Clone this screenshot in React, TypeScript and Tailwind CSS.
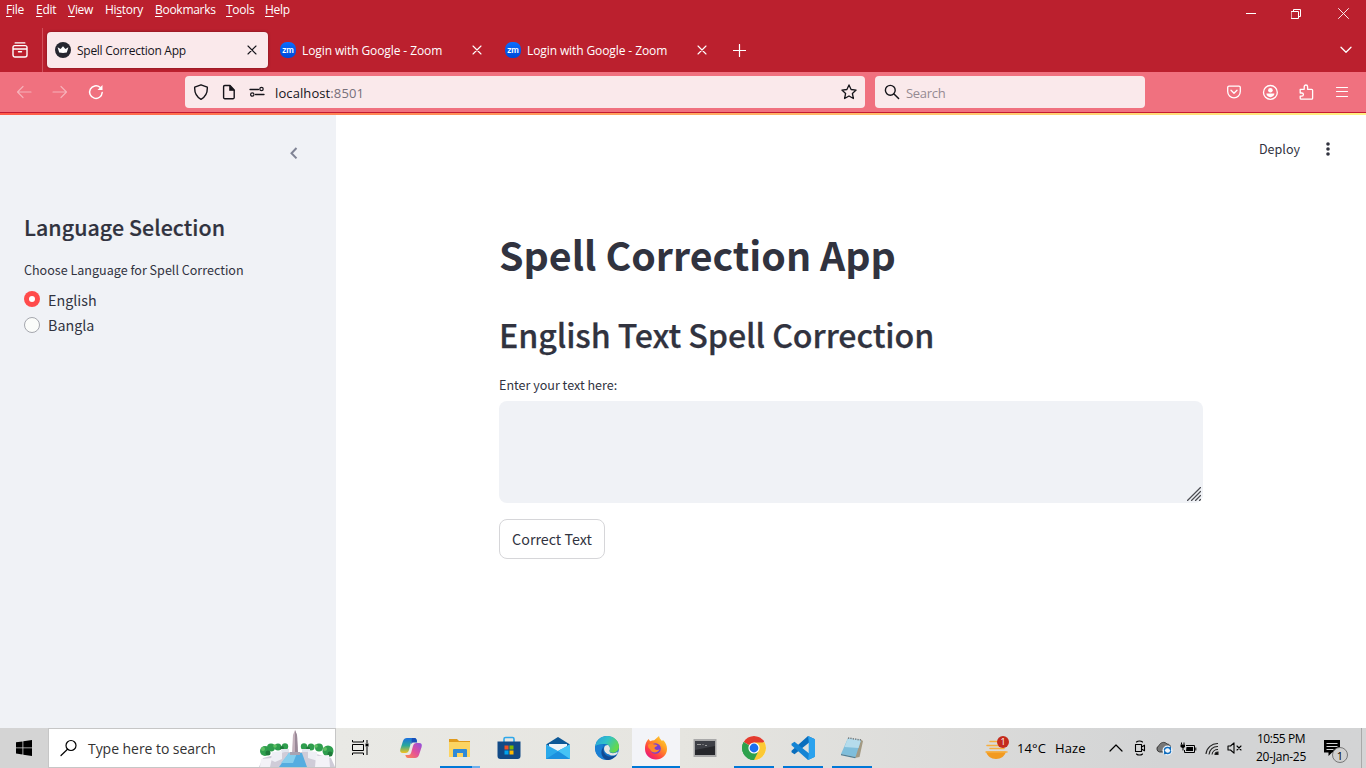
import React from 'react';

type Kids = { children?: React.ReactNode; className?: string };

const UI = "font-['Open_Sans','Noto_Sans',sans-serif]";
const PAGE = "font-['Noto_Sans_CJK_SC','Noto_Sans',sans-serif]";

function Ico({ s = 16, w, h, children, className = '' }: Kids & { s?: number; w?: number; h?: number }) {
  const W = w ?? s;
  const H = h ?? s;
  return (
    <svg
      width={W}
      height={H}
      viewBox={`0 0 ${W} ${H}`}
      fill="none"
      stroke="currentColor"
      strokeLinecap="round"
      strokeLinejoin="round"
      className={`shrink-0 ${className}`}
    >
      {children}
    </svg>
  );
}

function MenuBar() {
  const items: [string, string, string, string][] = [
    ['', 'F', 'ile', 'w-[30px]'],
    ['', 'E', 'dit', 'w-[32px]'],
    ['', 'V', 'iew', 'w-[37px]'],
    ['Hi', 's', 'tory', 'w-[50px]'],
    ['', 'B', 'ookmarks', 'w-[71px]'],
    ['', 'T', 'ools', 'w-[39px]'],
    ['', 'H', 'elp', 'w-[40px]'],
  ];
  return (
    <div className="flex h-7 justify-between text-white">
      <div className="flex pl-[6px] text-[12px] leading-[20px] tracking-[-0.28px]">
        {items.map(([a, u, b, w]) => (
          <span key={u + b} className={`${w} whitespace-nowrap`}>
            {a}
            <span className="underline underline-offset-2">{u}</span>
            {b}
          </span>
        ))}
      </div>
      <div className="flex h-[27px] items-center">
        <div className="flex w-[46px] justify-center">
          <Ico w={10} h={11}><path d="M0 5.5h10" strokeLinecap="butt" /></Ico>
        </div>
        <div className="flex w-[46px] justify-center">
          <Ico s={11} className="mt-px -ml-px"><path d="M.5 2.500h7v7h-7zM2.500 2V.500h7v7H8" strokeLinejoin="miter" /></Ico>
        </div>
        <div className="flex w-[46px] justify-center">
          <Ico s={11}><path d="M.5.5l10 10M10.5.5l-10 10" strokeWidth=".9" /></Ico>
        </div>
      </div>
    </div>
  );
}

function ZoomLogo() {
  return (
    <div className="flex size-4 shrink-0 items-center justify-center rounded-[7px] bg-linear-to-b from-[#0a6cff] to-[#0048d8] font-['Lato',sans-serif] text-[9px] leading-none font-bold text-white">
      <span className="mt-[-2px]">zm</span>
    </div>
  );
}

function CloseX({ className = '' }: Kids) {
  return (
    <Ico s={10} className={className}>
      <path d="M1 1l8 8M9 1L1 9" strokeWidth="1.1" />
    </Ico>
  );
}

function TabStrip() {
  return (
    <div className="flex h-11 items-center text-[12px] text-white">
      <div className="flex h-11 w-[43px] items-center border-r border-[#d0505c] pl-3">
        <Ico s={16}>
          <path d="M3.200 .9h9.600M1 7V5.400a1.800 1.800 0 0 1 1.800-1.800h10.400A1.800 1.800 0 0 1 15 5.400V13a2 2 0 0 1-2 2H3a2 2 0 0 1-2-2V7h14M6.500 9.700h3" strokeWidth="1.4" />
        </Ico>
      </div>
      <div className="ml-1 flex h-9 w-[221px] items-center rounded-[4px] bg-[#fae9eb] pr-[11px] pl-2 text-[#15141a] shadow-[0_0_3px_rgba(0,0,0,0.4)]">
        <svg width="16" height="16" viewBox="0 0 16 16" className="shrink-0">
          <circle cx="8" cy="8" r="8" fill="#262730" />
          <path d="M2.600 5.200l3 1.700L8 4.200l2.400 2.700 3-1.700-1.600 5.400c-2.500.5-5 .5-7.600 0z" fill="#fff" />
        </svg>
        <span className="ml-[6px] flex-1 pt-[2px] tracking-[-0.27px] whitespace-nowrap">Spell Correction App</span>
        <CloseX />
      </div>
      <div className="flex w-[225px] items-center pl-3">
        <ZoomLogo />
        <span className="ml-[6px] w-[170px] pt-[2px] tracking-[-0.1px] whitespace-nowrap">Login with Google - Zoom</span>
        <CloseX />
      </div>
      <div className="flex w-[225px] items-center pl-3">
        <ZoomLogo />
        <span className="ml-[6px] w-[170px] pt-[2px] tracking-[-0.1px] whitespace-nowrap">Login with Google - Zoom</span>
        <CloseX />
      </div>
      <Ico s={13} className="mt-px ml-[15px]"><path d="M6.500 .5v12M.5 6.500h12" strokeWidth="1.2" /></Ico>
      <Ico w={12} h={8} className="mr-[14px] ml-auto"><path d="M1 1.200l5 5 5-5" strokeWidth="1.3" /></Ico>
    </div>
  );
}

function Toolbar() {
  return (
    <div className="flex h-10 items-center bg-[#f0717f] text-white">
      <Ico s={16} className="ml-4 opacity-45"><path d="M15 8H1.500M7 2.500L1.500 8 7 13.500" strokeWidth="1.2" /></Ico>
      <Ico s={16} className="ml-5 opacity-45"><path d="M1 8h13.500M9 2.500l5.500 5.500L9 13.500" strokeWidth="1.2" /></Ico>
      <Ico s={16} className="ml-5">
        <path d="M14.200 8.500a6.300 6.300 0 1 1-2.200-5.200" strokeWidth="1.500" />
        <path d="M14.500 1v5H9.500z" fill="currentColor" stroke="none" />
      </Ico>
      <div className="ml-[81px] flex h-8 w-[680px] items-center rounded-[4px] bg-[#fae9eb] px-2 text-[#15141a]">
        <Ico s={16}><path d="M8 .800l6.300 2.400c.3 5.500-1.800 9.700-6.300 12.100C3.500 12.900 1.400 8.700 1.700 3.200z" strokeWidth="1.400" /></Ico>
        <Ico s={16} className="ml-3">
          <path d="M3.800 1.500H9L13.200 6v7.500a1.200 1.200 0 0 1-1.200 1.200H3.800a1.200 1.200 0 0 1-1.200-1.200V2.700a1.200 1.200 0 0 1 1.200-1.200z" strokeWidth="1.400" />
          <path d="M8.500 1.500V6.500h4.700z" fill="currentColor" strokeWidth=".6" />
        </Ico>
        <Ico s={16} className="ml-3">
          <path d="M1 5.500h8.500M6.500 10.500H15" strokeWidth="1.300" />
          <circle cx="12.500" cy="5" r="1.700" strokeWidth="1.200" />
          <circle cx="3.300" cy="10.500" r="1.700" strokeWidth="1.200" />
        </Ico>
        <span className="ml-[10px] flex-1 pt-[3px] text-[13px] tracking-[0.1px]">
          localhost<span className="text-[#77707a]">:8501</span>
        </span>
        <Ico s={16}><path d="M8 .9l2.100 4.600 5 .600-3.700 3.400 1 5L8 12l-4.400 2.500 1-5L.9 6.100l5-.600z" strokeWidth="1.300" /></Ico>
      </div>
      <div className="ml-[10px] flex h-8 w-[270px] items-center rounded-[4px] bg-[#fae9eb] pl-[9px] text-[#15141a]">
        <Ico s={16}><circle cx="6.300" cy="6.300" r="4.900" strokeWidth="1.400" /><path d="M10 10l4.600 4.500" strokeWidth="1.500" /></Ico>
        <span className="ml-[6px] pt-[3px] text-[13px] tracking-[-0.3px] text-[#958a92]">Search</span>
      </div>
      <div className="mr-4 ml-auto flex gap-5">
        <Ico s={16}><path d="M3 2.200h10a1.300 1.300 0 0 1 1.300 1.300v4a6.300 6.300 0 0 1-12.600 0v-4A1.300 1.300 0 0 1 3 2.200zM5 6.300l3 2.900 3-2.900" strokeWidth="1.300" /></Ico>
        <Ico s={16}>
          <circle cx="8.400" cy="8.400" r="6.900" strokeWidth="1.300" />
          <circle cx="8.400" cy="6.300" r="2.300" fill="currentColor" stroke="none" />
          <path d="M4.400 9.600h8c0 2-1.800 3.600-4 3.600s-4-1.600-4-3.600z" fill="currentColor" stroke="none" />
        </Ico>
        <Ico s={16}><path d="M2.200 5.300h4V2.700a1.700 1.700 0 0 1 3.400 0v2.600h4a1 1 0 0 1 1 1v7.900a1 1 0 0 1-1 1H3.200a1 1 0 0 1-1-1v-2h1.600a1.600 1.600 0 0 0 0-3.200H2.200z" strokeWidth="1.300" /></Ico>
        <Ico s={16}><path d="M2.500 3.500h11M2.500 7.500h11M2.500 12.500h11" strokeWidth="1.200" /></Ico>
      </div>
    </div>
  );
}

function Sidebar() {
  return (
    <aside className="flex w-[336px] shrink-0 flex-col bg-[#f0f2f6] pt-[32px] pl-6">
      <Ico w={8} h={13} className="ml-[266px] text-[#808495]"><path d="M6.500 1l-5 5.200 5 5.200" strokeWidth="2" strokeLinecap="butt" strokeLinejoin="miter" /></Ico>
      <h2 className="mt-[52px] text-[21.400px] leading-[30px] font-medium tracking-[0.06px] whitespace-nowrap [-webkit-text-stroke:0.2px]">Language Selection</h2>
      <p className="mt-[18px] text-[12.550px] leading-[20px] whitespace-nowrap">Choose Language for Spell Correction</p>
      <div className="mt-[8px] flex h-[25px] items-center">
        <span className="mb-[3px] flex size-4 items-center justify-center rounded-full bg-[#ff4b4b]">
          <span className="size-[6px] rounded-full bg-white" />
        </span>
        <span className="mb-[2px] ml-2 text-[14.300px] leading-[24px]">English</span>
      </div>
      <div className="flex h-[25px] items-center">
        <span className="mb-[2px] size-4 rounded-full border border-[#a5a7ae] bg-[#fbfcfa]" />
        <span className="mb-[2px] ml-2 text-[14.300px] leading-[24px]">Bangla</span>
      </div>
    </aside>
  );
}

function MainPanel() {
  return (
    <main className="flex-1 bg-white">
      <div className="flex h-[69px] items-center justify-end pr-[35px]">
        <span className="text-[12.550px]">Deploy</span>
        <svg width="6" height="16" viewBox="0 0 6 16" className="mb-[2px] ml-[25px]" fill="#31333f">
          <circle cx="3" cy="3" r="1.800" /><circle cx="3" cy="8" r="1.800" /><circle cx="3" cy="13" r="1.800" />
        </svg>
      </div>
      <div className="ml-[163px] w-[704px] pt-[42px]">
        <h1 className="h-[56px] text-[39.350px] leading-[56px] font-bold whitespace-nowrap">Spell Correction App</h1>
        <h2 className="mt-[28px] h-[48px] text-[32.200px] leading-[48px] font-medium tracking-[-0.1px] whitespace-nowrap [-webkit-text-stroke:0.25px]">English Text Spell Correction</h2>
        <label className="mt-[17px] block text-[12.550px] leading-[20px]">Enter your text here:</label>
        <div className="mt-[6px] flex h-[102px] items-end justify-end rounded-lg bg-[#f0f2f6] p-[2px]">
          <Ico s={14} className="text-[#4b4c52]"><path d="M.500 13.500l13-13M4.500 13.500l9-9M8.500 13.500l5-5M12.500 13.500l1-1" strokeWidth="1.200" /></Ico>
        </div>
        <button className="mt-4 h-10 w-[106px] rounded-lg border border-[#d6d6d9] text-[14.300px] leading-[24px] whitespace-nowrap">Correct Text</button>
      </div>
    </main>
  );
}

function CityArt() {
  return (
    <svg width="76" height="38" viewBox="0 0 76 38" className="shrink-0">
      <g fill="#2f9e4e">
        <circle cx="6" cy="22" r="5" /><circle cx="12" cy="18.500" r="4" /><circle cx="19" cy="18" r="3.500" /><circle cx="26" cy="17.500" r="3.200" />
        <circle cx="45" cy="17.500" r="3.200" /><circle cx="52" cy="18" r="3.500" /><circle cx="60" cy="18.500" r="4" /><circle cx="69" cy="22" r="5.500" />
      </g>
      <g fill="#5fbf63"><circle cx="4" cy="20" r="2" /><circle cx="16" cy="17" r="1.800" /><circle cx="57" cy="17" r="1.800" /><circle cx="66" cy="20" r="2" /></g>
      <g fill="#1f7a3a"><circle cx="9" cy="24" r="2.500" /><circle cx="23" cy="19" r="2" /><circle cx="71" cy="25" r="2.500" /><circle cx="49" cy="19.500" r="2" /></g>
      <path d="M22 20h8v7h-8zM43 20h8v7h-8z" fill="#e2e5ee" />
      <path d="M0 38l4-9 22-6h24l22 6 4 9z" fill="#cfccd8" />
      <path d="M30 24h13l5 14H20z" fill="#55ade0" />
      <path d="M30 24h8l-4 10H22z" fill="#86cdec" />
      <path d="M13 23l10-1v8l-7 3-4-2zM49 22l9 1 1 9-10-3z" fill="#eeeff5" />
      <path d="M2 30l11-1-2 9H1zM57 27l13-1 1 12H56z" fill="#f3f2f7" />
      <path d="M34 6l2-5 2 5 1 18h-6z" fill="#c5b2bd" />
      <path d="M36 1l2 5 1 18h-3z" fill="#9a8998" />
      <path d="M31 23h10v3H31z" fill="#a9a3b2" />
    </svg>
  );
}

function App24({ children, active, line, tail }: Kids & { active?: boolean; line?: boolean; tail?: boolean }) {
  return (
    <div className={`mr-px flex h-10 w-12 shrink-0 flex-col items-center ${active ? 'bg-[#f3f4f8]' : ''}`}>
      <div className="flex h-[38px] items-center pt-[2px]">
        <svg width="24" height="24" viewBox="0 0 24 24">{children}</svg>
      </div>
      {line && (
        <div className={`flex h-[2px] ${active ? 'w-12' : 'w-10'} bg-[#0078d7]`}>
          {tail && <span className="ml-auto w-2 bg-[#6cb0ee]" />}
        </div>
      )}
    </div>
  );
}

function Taskbar() {
  return (
    <footer className="flex h-10 bg-linear-to-r from-[#e9e9e5] from-25% via-[#e6e5e0] via-50% to-[#d3d4d5] to-85% text-black">
      <div className="flex w-[48px] shrink-0 items-center justify-center bg-[#d4d4d4]">
        <svg width="16" height="16" viewBox="0 0 16 16"><path d="M0 2.300l6.500-.900v6.100H0zM7.300 1.300L16 0v7.500H7.300zM0 8.300h6.500v6.200L0 13.600zM7.300 8.300H16V16l-8.700-1.300z" /></svg>
      </div>
      <div className="flex w-[288px] shrink-0 items-center border border-[#c6c6c6] bg-white pl-[11px]">
        <Ico s={18}><circle cx="11" cy="6.500" r="5" strokeWidth="1.200" /><path d="M7.500 10.200L1 16.500" strokeWidth="1.200" /></Ico>
        <span className="ml-[10px] flex-1 text-[14px] tracking-[-0.05px] whitespace-nowrap text-[#333]">Type here to search</span>
        <CityArt />
      </div>
      <div className="flex w-[51px] shrink-0 items-center pl-4">
        <svg width="17" height="17" viewBox="0 0 17 17" fill="none" stroke="#000" className="mb-px">
          <path d="M.500 1v2h11V1M.500 16v-2h11v2M.500 5.500h11v6H.500zM15 1v3M15 8v8" /><path d="M13.500 4.500h3v3h-3z" fill="#000" stroke="none" />
        </svg>
      </div>
      <App24>
        <defs>
          <linearGradient id="cpA" x1="0" y1="0" x2="0" y2="1"><stop offset="0" stopColor="#1b6fe0" /><stop offset=".5" stopColor="#2aa89a" /><stop offset="1" stopColor="#f3c21b" /></linearGradient>
          <linearGradient id="cpB" x1="1" y1="0" x2="0" y2="1"><stop offset="0" stopColor="#8d50e0" /><stop offset=".5" stopColor="#e34f9a" /><stop offset="1" stopColor="#ff8a4c" /></linearGradient>
        </defs>
        <path d="M8 2h7.500c1.500 0 2 1 2.500 3h-3.500c-1.500 0-2.300.8-2.800 2.500L10 14c-.6 2-1.500 3-3.500 3H4c-2.500 0-3.300-1.500-2.600-4L4 5c.7-2 2-3 4-3z" fill="url(#cpA)" />
        <path d="M16 22H9c-1.500 0-2.200-1-2.700-3h3c1.500 0 2.400-.8 2.900-2.500L14 10c.6-2 1.500-3 3.500-3H20c2.500 0 3.300 1.500 2.600 4L20 19c-.7 2-2 3-4 3z" fill="url(#cpB)" />
        <path d="M13 2h2.500c1.500 0 2 1 2.700 4.500h-4.500L12 8z" fill="#174fb8" />
      </App24>
      <App24 line tail>
        <path d="M1 3h8l2 2h11v4H1z" fill="#e09a1c" /><path d="M1 6h21v15H1z" fill="#fcd462" />
        <path d="M5 21v-7a1 1 0 0 1 1-1h12a1 1 0 0 1 1 1v7h-4v-4H9v4z" fill="#2e8ad8" />
      </App24>
      <App24>
        <path d="M7 6V3a1.500 1.500 0 0 1 1.500-1.500h7A1.500 1.500 0 0 1 17 3v3" fill="none" stroke="#2fa8ea" strokeWidth="1.600" />
        <path d="M.5 5.500h23V20a3 3 0 0 1-3 3h-17a3 3 0 0 1-3-3z" fill="#124a86" />
        <path d="M7.500 9.500h4v4h-4z" fill="#f25022" /><path d="M12.500 9.500h4v4h-4z" fill="#7fba00" /><path d="M7.500 14.500h4v4h-4z" fill="#00a4ef" /><path d="M12.500 14.500h4v4h-4z" fill="#ffb900" />
      </App24>
      <App24>
        <path d="M0 8.500L12 1l12 7.500L12 15z" fill="#0c5796" /><path d="M3 8h18v6l-9 3-9-3z" fill="#eef3f8" />
        <path d="M0 8.500L12 15l12-6.500V23H0z" fill="#2aa9ea" /><path d="M0 23l15-9.500 9 7V23z" fill="#1b90de" /><path d="M12 15l12-6.500V23z" fill="#45c3f5" />
      </App24>
      <App24>
        <defs>
          <linearGradient id="edA" x1="0" y1="0" x2="1" y2=".5"><stop offset="0" stopColor="#2a9de0" /><stop offset=".5" stopColor="#30c2c8" /><stop offset="1" stopColor="#65d94a" /></linearGradient>
        </defs>
        <circle cx="12" cy="12" r="12" fill="#1373c8" />
        <path d="M.2 10.500C1.300 4 6 0 12 0c7 0 12 5 12 10.500 0 4-3 6.300-6.200 6.300-3 0-4-1.200-3.400-2.200 1.500-2.500.3-6.600-4.400-6.600C5.500 8 1.500 9 .2 10.500z" fill="url(#edA)" />
        <path d="M8.500 9C5.500 13 8 21 14.500 22.500 10 25 .3 22.300 0 12c2-3.500 5.500-4 8.500-3z" fill="#1a80d4" />
        <path d="M9 11c-2 4 1 9.500 6.500 9.500 3 0 5.500-1 7-2.700C20 22.500 14.500 24.500 12 24 6 22 4.500 14 9 11z" fill="#124a93" />
        <path d="M14.200 15c.3 1.500 1.800 2.200 3.800 2.200 2 0 3.500-.5 4.700-1.700l-.3 2.300c-1.500 1.400-3.500 1.700-5 1.700-3 0-5-2-3.200-4.500z" fill="#e8e7e3" />
        <path d="M14.400 14.600c1.200-2 .5-4-1-5.400-1.300-.4-3.600.3-4.200 2.300-.7 2.600 1 5.500 4 6.800 1 .3 1.500-1 1-2z" fill="#e8e7e3" />
      </App24>
      <App24 active line>
        <defs>
          <linearGradient id="ffA" x1="1" y1="0" x2=".2" y2="1"><stop offset="0" stopColor="#ffe23c" /><stop offset=".4" stopColor="#ff9a24" /><stop offset=".75" stopColor="#ff3d45" /><stop offset="1" stopColor="#e31587" /></linearGradient>
        </defs>
        <path d="M3 5l1.500-2 1.700 2.200c1.300-.7 2.800-1 4-1L15 0c.4 2.500 1.500 3 3 5l1-1c2.800 2.500 4 5.500 4 9 0 6-5 10.500-11 10.500S1 19 1 13c0-3 .5-6 2-8z" fill="url(#ffA)" />
        <circle cx="11.500" cy="12.500" r="5.300" fill="#7a3fd0" />
        <path d="M4 9c2-2 4-2 6-.5 1.500 0 3 .3 3.500 1.200-1 1-2.500 1-3 2 0 2 2.500 3 5 1.500-1 4-8 4.500-9.500 0C4.500 12 4 11 4 9z" fill="#ff8a2b" />
      </App24>
      <App24>
        <path d="M.5 3h23v18H.5z" fill="#a9a9a9" /><path d="M2 5h20v14H2z" fill="#26272b" /><path d="M2 5h20v5L2 14z" fill="#3e4046" />
        <path d="M4 8.500h4M9.500 8.500h1M12 9.500h2" stroke="#9c9c9c" />
      </App24>
      <App24 line>
        <circle cx="12" cy="12" r="12" fill="#fff" />
        <path d="M12 12L1.610 6A12 12 0 0 1 22.390 6z" fill="#e33b2e" />
        <path d="M12 12l10.390-6A12 12 0 0 1 12 24z" fill="#fcc934" />
        <path d="M12 12v12A12 12 0 0 1 1.610 6z" fill="#2da14d" />
        <path d="M12 6.500h10.600L12 24l4.800-9.200z" fill="#fcc934" />
        <path d="M1.610 6L7.200 14.800 12 17.500 16 16l-4 8A12 12 0 0 1 1.610 6z" fill="#2da14d" />
        <circle cx="12" cy="12" r="5.600" fill="#fff" /><circle cx="12" cy="12" r="4.400" fill="#1d6ff0" />
      </App24>
      <App24 line>
        <path d="M17 0l7 3.200L17.500 7 3.500 18.300.5 16.200v-1.500z" fill="#0a6ebd" />
        <path d="M17 24l7-3.200L17.500 17 3.500 5.700.5 7.800v1.500z" fill="#1484d4" />
        <path d="M17 0l7 3.200v17.600L17 24l.7-5V5z" fill="#2ba2ee" />
      </App24>
      <App24 line>
        <path d="M20 3l3 2-3.500 16-5 1z" fill="#a39a83" /><path d="M8 2L21 4l-5.500 17L1 18z" fill="#7fbedb" /><path d="M8 2L21 4l-2.500 8L4.500 11z" fill="#b5dcec" />
        <path d="M8 2L21 4" stroke="#777" strokeWidth="1.500" strokeDasharray="1.200 1.200" /><path d="M1 18l14.500 3-.3 1.200L1 19.200z" fill="#4e7e95" />
      </App24>

      <div className="ml-auto flex shrink-0 items-center">
        <svg width="26" height="24" viewBox="0 0 26 24" className="mr-[6px]">
          <path d="M1 15.500h20c-1 4.500-5 7.500-10 7.500S2 20 1 15.500z" fill="#f29a1f" />
          <path d="M5 5.500h8M2 9.500h12M5 12.500h14M1 16h21" stroke="#f7ae3f" strokeWidth="1.500" strokeLinecap="round" />
          <circle cx="18" cy="6" r="6" fill="#c42b1c" />
          <text x="18" y="9.300" textAnchor="middle" fontSize="9" fill="#fff" fontFamily="Open Sans">1</text>
        </svg>
        <span className="w-[38px] pt-px text-[13px] tracking-[0.1px]">14°C</span>
        <span className="w-[54px] pt-px text-[13px] tracking-[0.1px]">Haze</span>
        <Ico w={14} h={8}><path d="M1 7l6-6 6 6" strokeWidth="1.200" /></Ico>
        <Ico w={14} h={16} className="ml-[10px]"><path d="M2.500 4.500h6v7h-6zM8.500 7l3-1.800v5.600l-3-1.800M3.500 2C5 .6 8 .6 9.500 2M3.500 14c1.500 1.400 4.500 1.400 6 0" strokeWidth="1.100" /></Ico>
        <svg width="17" height="16" viewBox="0 0 17 16" className="ml-[9px]">
          <path d="M3.500 12A3.300 3.300 0 0 1 3 5.700C4 2.500 8.500 1 11 4c2 0 3.500 1.500 3.500 3L9 12z" fill="#777" stroke="#222" strokeWidth=".8" />
          <circle cx="11.500" cy="10.500" r="5" fill="#eef4fa" /><path d="M8.300 9.800c.8-2.600 4.700-3 6-.8V6.800M14.800 11.200c-.8 2.600-4.700 3-6 .8v2.200" stroke="#0f6cbd" fill="none" strokeWidth="1.500" />
        </svg>
        <svg width="17" height="13" viewBox="0 0 17 13" className="ml-[7px]" fill="none" stroke="#000">
          <path d="M6 3.500h8.500v7H4.500V8M15.800 5.500v3" /><path d="M6.500 5h6.500v4H6z" fill="#000" stroke="none" /><path d="M1.500.5v2M4 .5v2" /><path d="M.500 2.500h4.500v2.500L3.500 6v2.500h-1V6L.500 5z" fill="#000" stroke="none" />
        </svg>
        <svg width="15" height="15" viewBox="0 0 15 15" className="ml-[8px]" fill="none" stroke="#222" strokeWidth="1.100">
          <path d="M1 13A11.500 11.500 0 0 1 13 2.500M4 13.500A8.500 8.500 0 0 1 13 5.500M7 13.500A5.800 5.800 0 0 1 13 8.500" /><path d="M10 13.500c0-1.500 1.500-2.500 3-2.500v2.500z" fill="#000" />
        </svg>
        <Ico w={16} h={14} className="ml-[7px]"><path d="M1 5h2.500L7 1.800v10.400L3.500 9H1zM10 5l4 4M14 5l-4 4" strokeWidth="1.100" /></Ico>
        <div className="ml-[8px] w-[60px] text-center text-[12px] leading-[18px] whitespace-nowrap">
          <div className="tracking-[-0.45px]">10:55 PM</div>
          <div className="tracking-[-0.25px]">20-Jan-25</div>
        </div>
        <div className="relative ml-[13px] h-10 w-[26px]">
          <svg width="17" height="17" viewBox="0 0 17 17" className="mt-3">
            <path d="M0 0h16v12.500H8L4.500 16v-3.500H0z" /><path d="M2.500 3.500h11M2.500 6.500h11M2.500 9.500h7" stroke="#d3d4d5" strokeWidth="1.100" />
          </svg>
          <div className="absolute top-[19px] left-[8px] flex size-4 items-center justify-center rounded-full border border-[#777] bg-[#d0d0d0] text-[11px] leading-none">1</div>
        </div>
        <div className="ml-[11px] h-10 w-[5px] border-l border-[#a9a9a9]" />
      </div>
    </footer>
  );
}

export default function App() {
  return (
    <div className={`flex h-[768px] w-[1366px] flex-col overflow-hidden ${UI}`}>
      <header className="flex h-[115px] shrink-0 flex-col bg-[#bb202e]">
        <MenuBar />
        <TabStrip />
        <Toolbar />
        <div className="h-px bg-[#c41a33]" />
        <div className="h-[2px] bg-linear-to-r from-[#ff5a48] via-[#ffa860] to-[#fff080]" />
      </header>
      <div className={`flex min-h-0 flex-1 text-[#31333f] ${PAGE}`}>
        <Sidebar />
        <MainPanel />
      </div>
      <Taskbar />
    </div>
  );
}
